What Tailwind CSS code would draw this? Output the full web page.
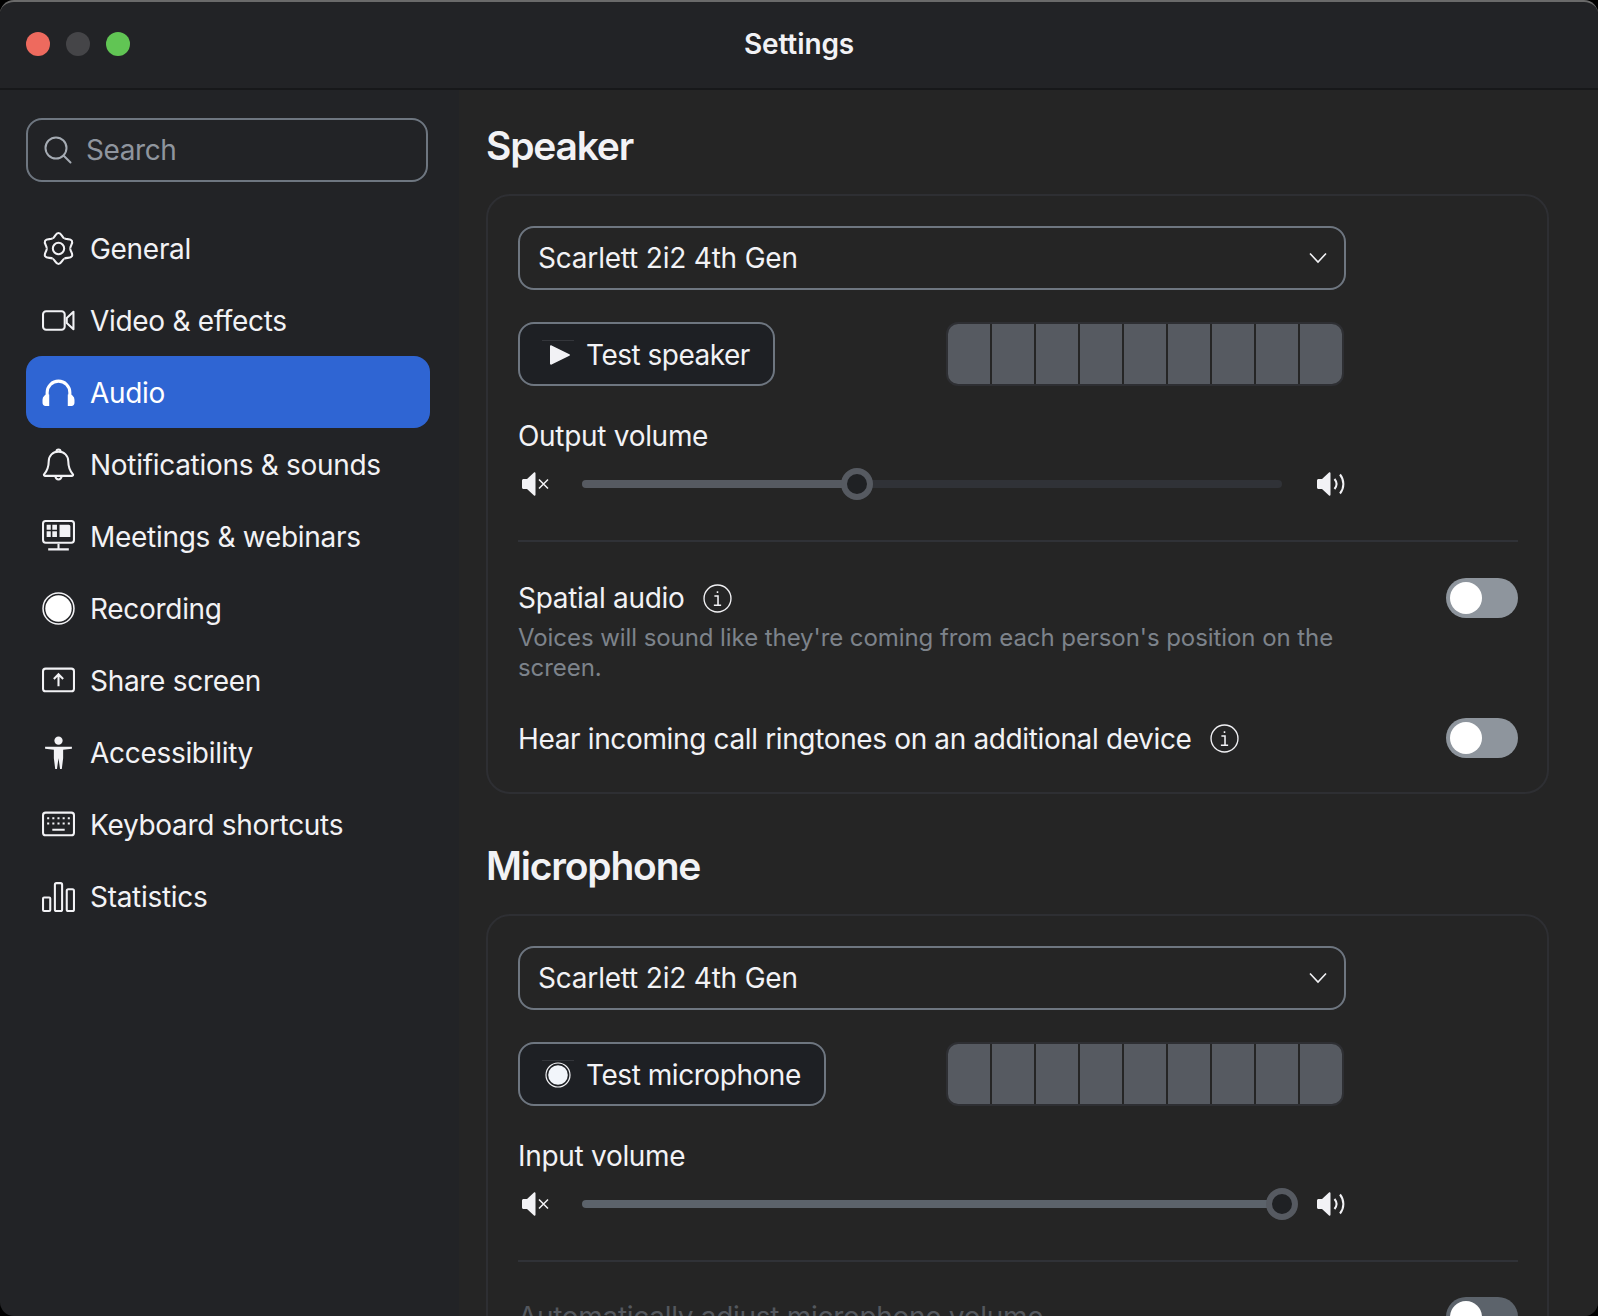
<!DOCTYPE html>
<html lang="en">
<head>
    <meta charset="UTF-8">
    <title>Settings</title>
    <script src="https://cdn.jsdelivr.net/npm/@tailwindcss/browser@4"></script>
</head>
<body class="bg-black font-['Inter',sans-serif] text-[#f2f2f5]">
    <div class="w-[1598px] h-[1316px] overflow-hidden flex flex-col rounded-[14px] bg-[#222326] border-t-2 border-[#6a6a6a]">
        <!-- title bar -->
        <header class="relative h-[88px] shrink-0 flex items-center justify-center border-b-2 border-[#17181a]">
            <div class="absolute left-[26px] top-[30px] flex gap-4">
                <span class="w-6 h-6 rounded-full bg-[#ee6a5e]"></span>
                <span class="w-6 h-6 rounded-full bg-[#454548]"></span>
                <span class="w-6 h-6 rounded-full bg-[#61c554]"></span>
            </div>
            <h1 class="text-[28px] font-semibold leading-none -mt-[2px] tracking-[-0.1px]">Settings</h1>
        </header>

        <div class="flex flex-1 min-h-0">
            <!-- sidebar -->
            <aside class="w-[459px] shrink-0 pl-[26px] pt-[28px]">
                <div class="w-[402px] h-[64px] rounded-[16px] border-2 border-[#6e7680] flex items-center pl-[16px] gap-[14px] text-[28px] tracking-[-0.4px] text-[#8f959e]">
                    <svg class="w-7 h-7" viewBox="0 0 28 28" fill="none" stroke="#a5abb3" stroke-width="2"><circle cx="12" cy="12" r="10.5"/><path d="M19.5 19.5l7 7" stroke-linecap="round"/></svg>
                    <span>Search</span>
                </div>
                <nav class="mt-[30px] w-[404px] flex flex-col text-[28px] tracking-[-0.3px]">
                    <a class="h-[72px] flex items-center gap-[15px] pl-[16px]">
                        <svg class="w-[33px] h-[33px]" viewBox="0 0 32 32" fill="none" stroke="#f2f2f5" stroke-width="2" stroke-linejoin="round">
                            <path d="M10.25 6.04C12.500 5.500 13 1 16 1s3.500 4.500 5.750 5.040"/>
                            <path transform="rotate(60 16 16)" d="M10.25 6.04C12.500 5.500 13 1 16 1s3.500 4.500 5.750 5.040"/>
                            <path transform="rotate(120 16 16)" d="M10.25 6.04C12.500 5.500 13 1 16 1s3.500 4.500 5.750 5.040"/>
                            <path transform="rotate(180 16 16)" d="M10.25 6.04C12.500 5.500 13 1 16 1s3.500 4.500 5.750 5.040"/>
                            <path transform="rotate(240 16 16)" d="M10.25 6.04C12.500 5.500 13 1 16 1s3.500 4.500 5.750 5.040"/>
                            <path transform="rotate(300 16 16)" d="M10.25 6.04C12.500 5.500 13 1 16 1s3.500 4.500 5.750 5.040"/>
                            <circle cx="16" cy="16" r="5.500"/>
                        </svg>
                        <span class="mt-[2px]">General</span>
                    </a>
                    <a class="h-[72px] flex items-center gap-[15px] pl-[16px]">
                        <svg class="w-[33px] h-[33px]" viewBox="0 0 32 32" fill="none" stroke="#f2f2f5" stroke-width="2" stroke-linejoin="round"><rect x="1" y="7" width="21" height="18" rx="3"/><path d="M30.500 7.500v17l-6.500-6v-5z"/></svg>
                        <span class="mt-[2px]">Video &amp; effects</span>
                    </a>
                    <a class="h-[72px] flex items-center gap-[15px] pl-[16px] bg-[#2f65d3] rounded-[16px] text-white">
                        <svg class="w-[33px] h-[33px]" viewBox="0 0 32 32" fill="none"><path d="M5 20v-4a11 11 0 0 1 22 0v4" stroke="#fff" stroke-width="3"/><path d="M7 18v11H3.500A3 3 0 0 1 .5 26v-3a5 5 0 0 1 6.500-5zM25 18v11h3.500a3 3 0 0 0 3-3v-3a5 5 0 0 0-6.500-5z" fill="#fff"/></svg>
                        <span class="mt-[2px]">Audio</span>
                    </a>
                    <a class="h-[72px] flex items-center gap-[15px] pl-[16px]">
                        <svg class="w-[33px] h-[33px]" viewBox="0 0 32 32" fill="none" stroke="#f2f2f5" stroke-width="2" stroke-linejoin="round"><path d="M16 3.500c-5.500 0-9.500 4-9.500 9.500 0 6-1.500 9-4.500 12.500-.5.700 0 1.500.8 1.500h26.400c.8 0 1.300-.8.8-1.500-3-3.500-4.500-6.500-4.500-12.500 0-5.500-4-9.500-9.500-9.500z"/><path d="M14 3.500a2 2 0 0 1 4 0M13 27.500a3 3 0 0 0 6 0"/></svg>
                        <span class="mt-[2px]">Notifications &amp; sounds</span>
                    </a>
                    <a class="h-[72px] flex items-center gap-[15px] pl-[16px]">
                        <svg class="w-[33px] h-[33px]" viewBox="0 0 32 32" fill="none"><rect x="1" y="1" width="30" height="21" rx="2.500" stroke="#f2f2f5" stroke-width="2"/><path d="M4.500 4.500h4v5h-4zM10 4.500h4.500v5H10zM4.500 11h4v5.500h-4zM10 11h4.500v5.500H10zM17 4.500h9a1.500 1.500 0 0 1 1.500 1.500v10.500H17z" fill="#f2f2f5"/><path d="M16 23v5M6 28.500h20" stroke="#f2f2f5" stroke-width="2"/></svg>
                        <span class="mt-[2px]">Meetings &amp; webinars</span>
                    </a>
                    <a class="h-[72px] flex items-center gap-[15px] pl-[16px]">
                        <svg class="w-[33px] h-[33px]" viewBox="0 0 32 32"><circle cx="16" cy="16" r="15" fill="none" stroke="#f2f2f5" stroke-width="1.500"/><circle cx="16" cy="16" r="12.800" fill="#fff"/></svg>
                        <span class="mt-[2px]">Recording</span>
                    </a>
                    <a class="h-[72px] flex items-center gap-[15px] pl-[16px]">
                        <svg class="w-[33px] h-[33px]" viewBox="0 0 32 32" fill="none" stroke="#f2f2f5" stroke-width="2"><rect x="1" y="4.500" width="30" height="22" rx="2.500"/><path d="M16 21.500v-11M11.500 14.500l4.500-4.500 4.500 4.500"/></svg>
                        <span class="mt-[2px]">Share screen</span>
                    </a>
                    <a class="h-[72px] flex items-center gap-[15px] pl-[16px]">
                        <svg class="w-[33px] h-[33px]" viewBox="0 0 32 32" fill="#f2f2f5"><circle cx="16" cy="4.500" r="4"/><path d="M3 10.500h26v1.800l-8.500 1v8.200l-1.300 10.500h-1.700L16 21.500l-1.500 10.500h-1.700l-1.300-10.500v-8.200l-8.500-1z"/></svg>
                        <span class="mt-[2px]">Accessibility</span>
                    </a>
                    <a class="h-[72px] flex items-center gap-[15px] pl-[16px]">
                        <svg class="w-[33px] h-[33px]" viewBox="0 0 32 32" fill="none"><rect x="1" y="4.500" width="30" height="22" rx="2.500" stroke="#f2f2f5" stroke-width="2"/><path d="M5 9h2v2H5zM10 9h2v2h-2zM15 9h2v2h-2zM20 9h2v2h-2zM25 9h2v2h-2zM5 14h2v2H5zM10 14h2v2h-2zM15 14h2v2h-2zM20 14h2v2h-2zM25 14h2v2h-2zM10 20h12v2H10z" fill="#f2f2f5"/></svg>
                        <span class="mt-[2px]">Keyboard shortcuts</span>
                    </a>
                    <a class="h-[72px] flex items-center gap-[15px] pl-[16px]">
                        <svg class="w-[33px] h-[33px]" viewBox="0 0 32 32" fill="none" stroke="#f2f2f5" stroke-width="2" stroke-linejoin="round"><rect x="1" y="17" width="7" height="13" rx="1"/><rect x="12.500" y="3" width="7" height="27" rx="1.500"/><rect x="24" y="9" width="7" height="21" rx="1.500"/></svg>
                        <span class="mt-[2px]">Statistics</span>
                    </a>
                </nav>
            </aside>

            <!-- content -->
            <main class="flex-1 min-w-0 bg-[#252525] pl-[28px] pr-[49px] tracking-[-0.3px]">
                <h2 class="text-[39px] font-semibold leading-none mt-[36px] -ml-[1px] tracking-[-1.2px]">Speaker</h2>
                <section class="mt-[29px] -ml-[1px] h-[600px] rounded-[24px] border-2 border-[#2e2f33] pl-[30px] pr-[29px] pt-[30px]">
                    <div class="w-[828px] h-[64px] rounded-[16px] border-2 border-[#6e7680] flex items-center justify-between pl-[18px] pr-[17px] text-[28px] tracking-[-0.2px]">
                        <span>Scarlett 2i2 4th Gen</span>
                        <svg class="w-[18px] h-[12px]" viewBox="0 0 18 12" fill="none" stroke="#f2f2f5" stroke-width="1.600"><path d="M1 1.500l8 8.500 8-8.500"/></svg>
                    </div>
                    <div class="mt-[32px] flex items-center justify-between w-[826px]">
                        <button class="relative w-[257px] h-[64px] rounded-[16px] border-2 border-[#6e7680] bg-[#1e2024] flex items-center pl-[30px] gap-[16px] text-[28px] tracking-[-0.5px]">
                            <span class="absolute left-[22px] top-[16px] w-[32px] h-[1px] bg-[#34363b]"></span>
                            <svg class="w-[20px] h-[20px] mt-[2px]" viewBox="0 0 20 20" fill="#f2f2f5"><path d="M0 1.500C0 .5.800 0 1.600.5l17.800 8.700c.7.400.7 1.200 0 1.600L1.600 19.500C.8 20 0 19.500 0 18.500z"/></svg>
                            <span class="mt-[1px]">Test speaker</span>
                        </button>
                        <div class="w-[398px] h-[64px] rounded-[12px] border-2 border-[#2e2f33] flex gap-[2px] overflow-hidden">
                            <span class="flex-1 bg-[#565a61]"></span><span class="flex-1 bg-[#565a61]"></span><span class="flex-1 bg-[#565a61]"></span>
                            <span class="flex-1 bg-[#565a61]"></span><span class="flex-1 bg-[#565a61]"></span><span class="flex-1 bg-[#565a61]"></span>
                            <span class="flex-1 bg-[#565a61]"></span><span class="flex-1 bg-[#565a61]"></span><span class="flex-1 bg-[#565a61]"></span>
                        </div>
                    </div>
                    <p class="mt-[32px] text-[28px] leading-[36px]">Output volume</p>
                    <div class="mt-[14px] h-[32px] pl-[4px] flex items-center">
                        <svg class="w-[28px] h-[24px] mr-[32px] shrink-0" viewBox="0 0 28 24" fill="#f2f2f5"><path d="M1.500 7H5L12 .6c.6-.6 1.500-.2 1.500.7v21.400c0 .9-.9 1.300-1.500.7L5 17H1.500C.7 17 0 16.300 0 15.500v-7C0 7.700.7 7 1.500 7z"/><path d="M17 7.500l9 9M26 7.500l-9 9" stroke="#f2f2f5" stroke-width="1.500" fill="none"/></svg>
                        <div class="relative w-[700px] h-[8px] rounded-full bg-[#303237] shrink-0">
                            <div class="h-full w-[275px] rounded-full bg-[#565a61]"></div>
                            <span class="absolute left-[259px] top-[-12px] w-[32px] h-[32px] rounded-full border-[6px] border-[#565a61] bg-[#1f2124]"></span>
                        </div>
                        <svg class="w-[28px] h-[24px] ml-[35px] shrink-0" viewBox="0 0 28 24" fill="#f2f2f5"><path d="M1.500 7H5L12 .6c.6-.6 1.500-.2 1.500.7v21.400c0 .9-.9 1.300-1.500.7L5 17H1.500C.7 17 0 16.300 0 15.500v-7C0 7.700.7 7 1.500 7z"/><path d="M17.500 7c2.500 3 2.500 7 0 10M23 2.500c4.500 5.500 4.500 13.500 0 19" fill="none" stroke="#f2f2f5" stroke-width="2"/></svg>
                    </div>
                    <hr class="mt-[40px] border-t-2 border-[#303237]">
                    <div class="mt-[36px] relative">
                        <div class="flex items-center gap-[18px] text-[28px] h-[40px]">
                            <span>Spatial audio</span>
                            <svg class="w-[29px] h-[29px]" viewBox="0 0 28 28" fill="none" stroke="#f2f2f5" stroke-width="1.300"><circle cx="14" cy="14" r="13"/><path d="M11 11.500h3.500V20M10.500 20.500h7M14 7v1.800" stroke-width="1.500"/></svg>
                        </div>
                        <span class="absolute right-0 top-0 w-[72px] h-[40px] rounded-full bg-[#8e959d]"><span class="block absolute left-[4px] top-[4px] w-[32px] h-[32px] rounded-full bg-white"></span></span>
                        <p class="w-[830px] text-[24px] leading-[30px] tracking-[-0.07px] text-[#7d838b] mt-[5px]">Voices will sound like they're coming from each person's position on the screen.</p>
                    </div>
                    <div class="mt-[35px] relative flex items-center gap-[18px] text-[28px] h-[40px] tracking-[-0.36px]">
                        <span class="mt-[2px]">Hear incoming call ringtones on an additional device</span>
                        <svg class="w-[29px] h-[29px]" viewBox="0 0 28 28" fill="none" stroke="#f2f2f5" stroke-width="1.300"><circle cx="14" cy="14" r="13"/><path d="M11 11.500h3.500V20M10.500 20.500h7M14 7v1.800" stroke-width="1.500"/></svg>
                        <span class="absolute right-0 top-0 w-[72px] h-[40px] rounded-full bg-[#8e959d]"><span class="block absolute left-[4px] top-[4px] w-[32px] h-[32px] rounded-full bg-white"></span></span>
                    </div>
                </section>

                <h2 class="text-[39px] font-semibold leading-none mt-[52px] -ml-[1px] tracking-[-1.2px]">Microphone</h2>
                <section class="mt-[29px] -ml-[1px] rounded-[24px] border-2 border-[#2e2f33] pl-[30px] pr-[29px] pt-[30px] h-[600px]">
                    <div class="w-[828px] h-[64px] rounded-[16px] border-2 border-[#6e7680] flex items-center justify-between pl-[18px] pr-[17px] text-[28px] tracking-[-0.2px]">
                        <span>Scarlett 2i2 4th Gen</span>
                        <svg class="w-[18px] h-[12px]" viewBox="0 0 18 12" fill="none" stroke="#f2f2f5" stroke-width="1.600"><path d="M1 1.500l8 8.500 8-8.500"/></svg>
                    </div>
                    <div class="mt-[32px] flex items-center justify-between w-[826px]">
                        <button class="relative w-[308px] h-[64px] rounded-[16px] border-2 border-[#6e7680] bg-[#1e2024] flex items-center pl-[25px] gap-[15px] text-[28px] tracking-[-0.45px]">
                            <span class="absolute left-[22px] top-[16px] w-[32px] h-[1px] bg-[#34363b]"></span>
                            <svg class="w-[26px] h-[26px] mt-[2px]" viewBox="0 0 26 26"><circle cx="13" cy="13" r="12" fill="none" stroke="#f2f2f5" stroke-width="1.200"/><circle cx="13" cy="13" r="9.800" fill="#f2f5fa"/></svg>
                            <span class="mt-[1px]">Test microphone</span>
                        </button>
                        <div class="w-[398px] h-[64px] rounded-[12px] border-2 border-[#2e2f33] flex gap-[2px] overflow-hidden">
                            <span class="flex-1 bg-[#565a61]"></span><span class="flex-1 bg-[#565a61]"></span><span class="flex-1 bg-[#565a61]"></span>
                            <span class="flex-1 bg-[#565a61]"></span><span class="flex-1 bg-[#565a61]"></span><span class="flex-1 bg-[#565a61]"></span>
                            <span class="flex-1 bg-[#565a61]"></span><span class="flex-1 bg-[#565a61]"></span><span class="flex-1 bg-[#565a61]"></span>
                        </div>
                    </div>
                    <p class="mt-[32px] text-[28px] leading-[36px]">Input volume</p>
                    <div class="mt-[14px] h-[32px] pl-[4px] flex items-center">
                        <svg class="w-[28px] h-[24px] mr-[32px] shrink-0" viewBox="0 0 28 24" fill="#f2f2f5"><path d="M1.500 7H5L12 .6c.6-.6 1.500-.2 1.500.7v21.400c0 .9-.9 1.300-1.500.7L5 17H1.500C.7 17 0 16.300 0 15.500v-7C0 7.700.7 7 1.500 7z"/><path d="M17 7.500l9 9M26 7.500l-9 9" stroke="#f2f2f5" stroke-width="1.500" fill="none"/></svg>
                        <div class="relative w-[700px] h-[8px] rounded-full bg-[#5c636b] shrink-0">
                            <span class="absolute left-[684px] top-[-12px] w-[32px] h-[32px] rounded-full border-[6px] border-[#565a61] bg-[#1f2124]"></span>
                        </div>
                        <svg class="w-[28px] h-[24px] ml-[35px] shrink-0" viewBox="0 0 28 24" fill="#f2f2f5"><path d="M1.500 7H5L12 .6c.6-.6 1.500-.2 1.500.7v21.400c0 .9-.9 1.300-1.500.7L5 17H1.500C.7 17 0 16.300 0 15.500v-7C0 7.700.7 7 1.500 7z"/><path d="M17.500 7c2.500 3 2.500 7 0 10M23 2.500c4.500 5.500 4.500 13.500 0 19" fill="none" stroke="#f2f2f5" stroke-width="2"/></svg>
                    </div>
                    <hr class="mt-[40px] border-t-2 border-[#303237]">
                    <div class="mt-[35px] relative flex items-center text-[28px] h-[40px] text-[#54585e]">
                        <span>Automatically adjust microphone volume</span>
                        <span class="absolute right-0 top-0 w-[72px] h-[40px] rounded-full bg-[#5c636b]"><span class="block absolute left-[4px] top-[4px] w-[32px] h-[32px] rounded-full bg-white"></span></span>
                    </div>
                </section>
            </main>
        </div>
    </div>
</body>
</html>
